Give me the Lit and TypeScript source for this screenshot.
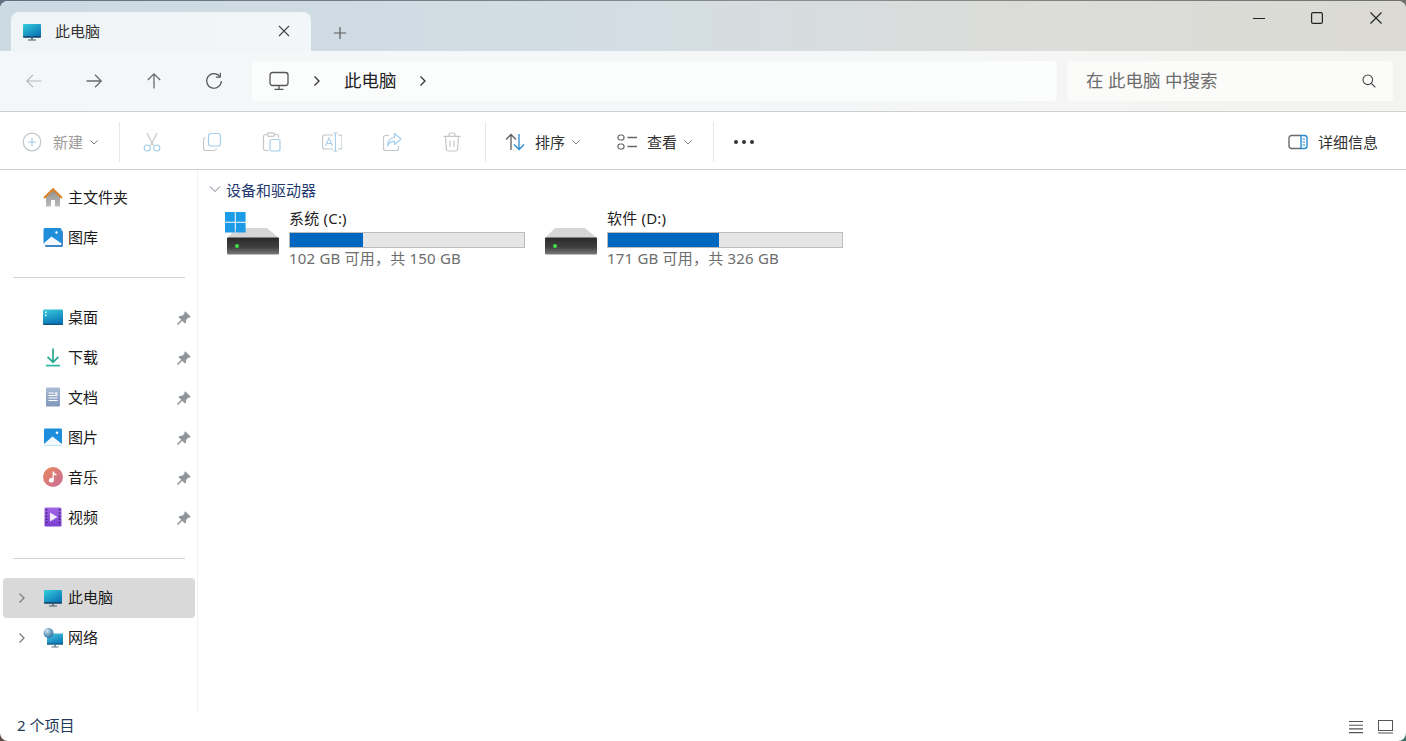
import { LitElement, html, css, svg } from "lit";
import { customElement } from "lit/decorators.js";

const i20 = (body: unknown, cls = "") => html`<svg class="ic ${cls}" width="20" height="20" viewBox="0 0 20 20" fill="none">${body}</svg>`;
const line = "#6b6b6b";

const monitor = (id: string) => i20(svg`
  <defs><linearGradient id=${id} x1="0" y1="0" x2="0.7" y2="1"><stop offset="0" stop-color="#35cfdc"/><stop offset="1" stop-color="#0b74b4"/></linearGradient></defs>
  <rect x="1" y="2" width="18" height="13" rx="0.8" fill="url(#${id})"/>
  <path d="M1 14.2h18V15a.8.8 0 0 1-.8.8H1.800A.8.8 0 0 1 1 15z" fill="#0d3f63"/>
  <path d="M9 16h2v1.500H9z" fill="#5c7482"/><path d="M6 17.500h8v1H6z" fill="#3f5968"/>`);

const home = i20(svg`
  <defs><linearGradient id="hb" x1="0" y1="0" x2="0" y2="1"><stop offset="0" stop-color="#8e8e8e"/><stop offset="1" stop-color="#bdbdbd"/></linearGradient></defs>
  <path d="M3 9.500 10 3l7 6.500V19.500H12V13H8v6.500H3z" fill="url(#hb)"/>
  <path d="M0.300 10.200 10 0.800l9.700 9.400-1.500 1.500L10 3.800 1.800 11.700z" fill="#d9832b"/>`);

const gallery = i20(svg`
  <rect x="2" y="3.500" width="18" height="16.500" rx="1.500" fill="#3f86c8"/>
  <rect x="0.500" y="1" width="18" height="17" rx="1.500" fill="#1f8fdc"/>
  <path d="M0.500 16.500 8.500 9.500l10 7V17a1 1 0 0 1-1 1H1.500a1 1 0 0 1-1-1z" fill="#f2f8fd"/>
  <circle cx="13.500" cy="5.500" r="1.200" fill="#fff"/>`);

const desktop = i20(svg`
  <defs><linearGradient id="dk" x1="0" y1="0" x2="0.3" y2="1"><stop offset="0" stop-color="#38c9da"/><stop offset="1" stop-color="#0c78b8"/></linearGradient></defs>
  <rect x="0" y="2.500" width="20" height="15" rx="1.200" fill="url(#dk)"/>
  <path d="M0 16.800h20v.2a1 1 0 0 1-1 1H1a1 1 0 0 1-1-1z" fill="#0d4f79"/>
  <rect x="2" y="4.500" width="1.600" height="1.600" fill="#e8fbff"/><rect x="2" y="7.500" width="1.600" height="1.600" fill="#e8fbff"/>`);

const download = i20(svg`
  <path d="M10 1.500V15M4.500 9.800 10 15.200l5.500-5.400" stroke="#2aa992" stroke-width="1.700"/>
  <path d="M3 18.600h14" stroke="#2fb6a0" stroke-width="1.700"/>`);

const docs = i20(svg`
  <defs><linearGradient id="dc" x1="0" y1="0" x2="0" y2="1"><stop offset="0" stop-color="#a9bcd6"/><stop offset="1" stop-color="#7f97ba"/></linearGradient></defs>
  <rect x="3" y="0.500" width="14" height="19" rx="1" fill="url(#dc)"/>
  <path d="M5.500 6h5.500M5.500 8.500h9M5.500 11h9M5.500 13.500h9" stroke="#fff" stroke-width="1"/>
  <rect x="12" y="5.500" width="2.500" height="2" fill="#fff"/>`);

const pictures = i20(svg`
  <rect x="1" y="1.500" width="18" height="17" rx="1.200" fill="#1c8edb"/>
  <path d="M1 17 9.500 9.500 19 17v.3a1.200 1.200 0 0 1-1.200 1.200H2.200A1.200 1.200 0 0 1 1 17.300z" fill="#f3f9fd"/>
  <circle cx="14" cy="5.800" r="1.300" fill="#fff"/>`);

const music = i20(svg`
  <defs><linearGradient id="mu" x1="0" y1="0" x2="1" y2="1"><stop offset="0" stop-color="#e98a55"/><stop offset="1" stop-color="#c96a9e"/></linearGradient></defs>
  <circle cx="10" cy="10" r="10" fill="url(#mu)"/>
  <path d="M9.600 4.500h1.300c.2 1.500 1.200 2.300 2.600 2.700v1.400c-1.100-.1-2-.6-2.600-1.200V13.200a2.500 2.300 0 1 1-1.300-2z" fill="#fff"/>`);

const video = i20(svg`
  <defs><linearGradient id="vi" x1="0" y1="0" x2="0" y2="1"><stop offset="0" stop-color="#a266e6"/><stop offset="1" stop-color="#7a3fd0"/></linearGradient></defs>
  <rect x="1.500" y="0.500" width="17" height="19" rx="1.200" fill="url(#vi)"/>
  <path d="M3.500 2v16M16.500 2v16" stroke="#3b2170" stroke-width="1.500" stroke-dasharray="1.500 1.700"/>
  <path d="M7 5.500v9l7.500-4.500z" fill="#f2eafd"/>`);

const network = i20(svg`
  <defs><linearGradient id="nt" x1="0" y1="0" x2="0.5" y2="1"><stop offset="0" stop-color="#4cc6e0"/><stop offset="1" stop-color="#0c7db9"/></linearGradient>
  <radialGradient id="gl" cx="0.35" cy="0.3" r="0.8"><stop offset="0" stop-color="#d6e6f0"/><stop offset="0.5" stop-color="#6fa3c4"/><stop offset="1" stop-color="#2c6a97"/></radialGradient></defs>
  <rect x="4" y="5.500" width="16" height="11" fill="url(#nt)"/><path d="M4 15.500h16v1H4z" fill="#0d4f79"/>
  <path d="M11 16.500h2v2h-2z" fill="#6c8796"/><path d="M8.500 18.500h7v1h-7z" fill="#5c7482"/>
  <circle cx="5.500" cy="5" r="5" fill="url(#gl)"/>`);

const pin = html`<svg class="pin" width="14" height="14" viewBox="0 0 14 14"><path d="M8.300 0.300 13.700 5.700l-1.200 1-.9-.3-2.400 2.400-.1 2.500-1.200 1.200L5.200 9.800 1 14 0 13l4.200-4.200-2.700-2.700 1.200-1.200 2.500-.1 2.400-2.400-.3-.9z" fill="#8e9499"/></svg>`;

const chevR = html`<svg class="tw" width="10" height="12" viewBox="0 0 10 12" fill="none"><path d="M2.500 1.500 7 6l-4.500 4.500" stroke="#7d7d7d" stroke-width="1.300"/></svg>`;
const chevD = html`<svg class="cd" width="10" height="10" viewBox="0 0 10 10" fill="none"><path d="M1.500 3.500 5 7l3.500-3.500" stroke="#7a7a7a" stroke-width="1"/></svg>`;
const chevHead = html`<svg width="12" height="10" viewBox="0 0 12 10" fill="none"><path d="M1 2.500 6 7.500l5-5" stroke="#6f7a8a" stroke-width="1"/></svg>`;

const back = (c: string) => i20(svg`<path d="M17.500 10H3M9 3.800 2.800 10 9 16.200" stroke=${c} stroke-width="1.200"/>`);
const fwd = i20(svg`<path d="M2.500 10H17M11 3.800 17.200 10 11 16.200" stroke=${line} stroke-width="1.300"/>`);
const up = i20(svg`<path d="M10 17.500V3M3.800 9 10 2.800 16.200 9" stroke=${line} stroke-width="1.300"/>`);
const refresh = i20(svg`<path d="M15.800 5.500A7.300 7.300 0 1 0 17.300 10" stroke="#555" stroke-width="1.200"/><path d="M16.300 1.800v4.400h-4.400" stroke="#555" stroke-width="1.200"/>`);
const pcOutline = i20(svg`<rect x="1" y="1.500" width="18" height="13" rx="2.500" stroke="#555" stroke-width="1.300"/><path d="M10 14.500v3.500M5.500 18.300h9" stroke="#555" stroke-width="1.300"/>`);

const G = "#c4c7c9", B = "#a6cdea";
const tNew = i20(svg`<circle cx="10" cy="10" r="8.800" stroke=${G} stroke-width="1.200"/><path d="M10 5.800v8.400M5.800 10h8.400" stroke=${B} stroke-width="1.200"/>`);
const tCut = i20(svg`<path d="M5 1l6.300 12.500M15 1 8.700 13.500" stroke=${G} stroke-width="1.200"/><circle cx="5.200" cy="16" r="3" stroke=${B} stroke-width="1.200"/><circle cx="14.800" cy="16" r="3" stroke=${B} stroke-width="1.200"/>`);
const tCopy = i20(svg`<path d="M3.500 5.500A2.500 2.500 0 0 0 1.500 8v8a2.500 2.500 0 0 0 2.500 2.500h8a2.500 2.500 0 0 0 2.500-2" stroke=${G} stroke-width="1.200"/><rect x="6.500" y="1.500" width="12" height="12.500" rx="2.500" stroke=${B} stroke-width="1.200"/>`);
const tPaste = i20(svg`<path d="M6.500 18.500H3.500a2 2 0 0 1-2-2V4.500a2 2 0 0 1 2-2h2M12 2.500h2.500a2 2 0 0 1 2 2V6" stroke=${G} stroke-width="1.200"/><rect x="5.500" y="0.800" width="7" height="3.500" rx="1.200" stroke=${G} stroke-width="1.200"/><rect x="8" y="7.500" width="10" height="11.500" rx="2" stroke=${B} stroke-width="1.200"/>`);
const tRen = i20(svg`<path d="M11.500 3H2.500a2 2 0 0 0-2 2v10a2 2 0 0 0 2 2h9M16 3h2a2 2 0 0 1 2 2v10a2 2 0 0 1-2 2h-2" stroke=${G} stroke-width="1.200"/><path d="M3.500 14 7 6l3.500 8M4.800 11.500h4.400M11.500 1h4M11.500 19h4M13.500 1v18" stroke=${B} stroke-width="1.100"/>`);
const tShare = i20(svg`<path d="M7 3.500H3.500a2 2 0 0 0-2 2v11a2 2 0 0 0 2 2h11a2 2 0 0 0 2-2V14" stroke=${G} stroke-width="1.200"/><path d="M12.500 1.500 19 7l-6.500 5.500V9.300C9 9.300 6.500 11 5.500 14c0-5 3-8.500 7-8.500z" stroke=${B} stroke-width="1.200" stroke-linejoin="round"/>`);
const tDel = i20(svg`<path d="M1.500 4.300h17M7 4V2.500A1.500 1.500 0 0 1 8.500 1h3A1.500 1.500 0 0 1 13 2.500V4M3.500 4.500l1 13A1.800 1.800 0 0 0 6.300 19h7.400a1.800 1.800 0 0 0 1.800-1.500l1-13M8 8.500v6.500M12 8.500v6.500" stroke=${G} stroke-width="1.200"/>`);
const tSort = i20(svg`<path d="M6 18V2.500M1 7.500l5-5 5 5" stroke="#5f5f5f" stroke-width="1.300"/><path d="M14 2v15.500M9 12.500l5 5 5-5" stroke="#2a8bd0" stroke-width="1.300"/>`);
const tView = i20(svg`<rect x="1" y="3" width="6" height="5" rx="2.200" stroke="#666" stroke-width="1.200"/><rect x="1" y="12" width="6" height="5" rx="2.200" stroke="#666" stroke-width="1.200"/><path d="M10.500 5.500H20M10.500 14.500H20" stroke="#666" stroke-width="1.300"/>`);
const tPanel = i20(svg`<path d="M13 3.500H3.500a2.500 2.500 0 0 0-2.500 2.500v8a2.500 2.500 0 0 0 2.500 2.500H13" stroke="#6a6a6a" stroke-width="1.400"/><path d="M13 3.500h3.500A2.500 2.500 0 0 1 19 6v8a2.500 2.500 0 0 1-2.500 2.500H13z" stroke="#2a8bd0" stroke-width="1.400"/><path d="M14.500 7h2.500M14.500 10h2.500M14.500 13h2.500" stroke="#2a8bd0" stroke-width="1.200"/>`);

const drive = (win: boolean, id: string) => html`<svg class="drive" width="56" height="46" viewBox="0 0 56 46" fill="none">
  <defs><linearGradient id=${id} x1="0" y1="0" x2="0" y2="1"><stop offset="0" stop-color="#2a2a2a"/><stop offset="0.55" stop-color="#3e3e3e"/><stop offset="1" stop-color="#7a7a7a"/></linearGradient></defs>
  <path d="M12 17h30l12 10H2z" fill="#d6d6d6"/>
  <rect x="2" y="26.500" width="52" height="17" rx="1" fill="url(#${id})"/>
  <circle cx="12" cy="35" r="2" fill="#3fe04c"/>
  ${win ? svg`<path d="M0 1h9.800v9.800H0zM10.800 1h9.800v9.800h-9.800zM0 11.800h9.800v9.800H0zM10.800 11.800h9.800v9.800h-9.800z" fill="#1d9be6"/>` : ""}
</svg>`;

const nav1 = [
  { icon: home, label: "主文件夹" },
  { icon: gallery, label: "图库" },
];
const nav2 = [
  { icon: desktop, label: "桌面" },
  { icon: download, label: "下载" },
  { icon: docs, label: "文档" },
  { icon: pictures, label: "图片" },
  { icon: music, label: "音乐" },
  { icon: video, label: "视频" },
];

@customElement("app-root")
export class AppRoot extends LitElement {
  static styles = css`
    :host {
      display: block; height: 100vh; overflow: hidden;
      font-family: "Noto Sans", "Noto Sans CJK SC", sans-serif;
      background:
        linear-gradient(90deg, #5f7180, #8c8f8e 60%, #6f6f6d) top / 100% 20px no-repeat,
        linear-gradient(90deg, #5a4a42, #5a4a42 50%, #3c6f66 50%, #3c6f66);
    }
    .win {
      box-sizing: border-box; margin-top: 1px; height: 740px;
      display: flex; flex-direction: column; background: #fff; border-radius: 8px; overflow: hidden;
    }
    svg { display: block; flex: none; }

    .title {
      height: 50px; flex: none; display: flex; align-items: flex-end; padding-left: 11px;
      background: linear-gradient(90deg, #cbdae3, #d3dde3 45%, #dcdcd8 75%, #dbdad5);
    }
    .tab {
      width: 300px; height: 39px; box-sizing: border-box; padding: 0 21px 2px 11px; display: flex; align-items: center;
      background: linear-gradient(90deg, #eff4f7, #f3f6f8); border-radius: 8px 8px 0 0;
      font-size: 15px; color: #333;
    }
    .tab .ic { margin-top: 2px; }
    .tab .name { margin-left: 13px; flex: 1; }
    .add { margin: 0 0 11px 22px; }
    .spacer { flex: 1; }
    .ctl { align-self: flex-start; display: flex; padding-right: 1px; }
    .ctl div { width: 58.500px; height: 34px; display: flex; align-items: center; justify-content: center; }

    .nav {
      height: 60px; flex: none; display: flex; align-items: center; padding: 0 13px 0 4px;
      background: linear-gradient(90deg, #f4f7f9, #f5f6f7 60%, #f3f3f0);
    }
    .nb { width: 60px; height: 40px; display: flex; align-items: center; justify-content: center; }
    .addr {
      flex: 1; height: 40px; margin: 0 10px 0 8px; border-radius: 4px; background: #fbfcfc;
      display: flex; align-items: center; padding-left: 17px; font-size: 17.500px; color: #222;
    }
    .addr .c1 { margin-left: 23px; }
    .addr .t { margin-left: 22px; padding-bottom: 3px; }
    .addr .c2 { margin-left: 21px; }
    .addr svg.tw path { stroke: #333; }
    .search {
      width: 326px; height: 40px; box-sizing: border-box; border-radius: 4px; background: #fbfbfa;
      display: flex; align-items: center; justify-content: space-between; padding: 0 17px 0 19px;
      font-size: 17.500px; color: #6c6c6c;
    }
    .search span { padding-bottom: 3px; }

    .tools {
      height: 59px; box-sizing: border-box; flex: none; display: flex; align-items: center; background: #fff;
      border-top: 1px solid #d0d0d0; border-bottom: 1px solid #d0d0d0; padding: 2px 28px 0 22px;
      font-size: 15px; color: #333;
    }
    .grp { display: flex; align-items: center; }
    .tgl { display: flex; align-items: center; }
    .tgl svg.ic { margin-right: 10px; }
    .tgl span { padding-bottom: 1px; }
    .tgl .cd { margin-left: 6px; }
    .dis { color: #9c9c9c; width: 97px; }
    .dis svg.ic { margin-right: 11px; }
    .vsep { width: 1px; height: 40px; background: #e6e6e6; flex: none; }
    .ti { width: 60px; display: flex; justify-content: center; }
    .sort { margin-left: 19px; }
    .view { margin-left: 36px; }
    .dots { margin-left: 20px; width: 20px; display: flex; justify-content: space-between; }
    .dots i { width: 4px; height: 4px; border-radius: 50%; background: #333; }
    .tools .vsep.a { margin-right: 2px; }
    .tools .vsep.b { margin-left: 3px; }
    .tools .vsep.c { margin-left: 20px; }
    .detail { display: flex; align-items: center; gap: 10px; }
    .detail span { padding-bottom: 1px; }

    .main { flex: 1; display: flex; min-height: 0; }
    .side { width: 197px; flex: none; padding-top: 7px; border-right: 1px solid #f2f2f2; }
    .row { height: 40px; display: flex; align-items: center; position: relative; padding-left: 43px; font-size: 15px; color: #1a1a1a; }
    .row .lbl { margin-left: 5px; flex: 1; padding-bottom: 2px; }
    .row .pin { margin: 2px 6px 0 0; }
    .row .tw { position: absolute; left: 17px; top: 14px; }
    .row.sel .lbl, .row.low .lbl { padding-bottom: 4px; }
    .row.sel { background: #d9d9d9; border-radius: 4px; margin: 1px 2px 0 3px; padding-left: 40px; }
    .row.sel .tw { left: 14px; top: 14px; }
    .hr { height: 40px; display: flex; align-items: center; padding: 1px 12px 0 13px; box-sizing: border-box; }
    .hr.two { padding-top: 2px; }
    .hr div { flex: 1; height: 1px; background: #d4d4d4; }

    .pane { flex: 1; padding: 7px 0 0 9px; }
    .head { display: flex; align-items: center; height: 24px; color: #1e3a70; font-size: 15px; gap: 5px; margin-left: 2px; }
    .tiles { display: flex; margin-top: 7px; padding-left: 18px; }
    .tile { width: 318px; display: flex; gap: 8px; }
    .tile .drive { margin-top: 3px; }
    .info { width: 236px; font-size: 15px; letter-spacing: 0.200px; }
    .nm { color: #1f1f1f; line-height: 22px; height: 22px; margin-top: -1px; }
    .bar { height: 16px; box-sizing: border-box; background: #e6e6e6; border: 1px solid #bcbcbc; margin-top: 3px; }
    .fill { height: 100%; background: #0067c0; }
    .sz { color: #6d6d6d; line-height: 20px; }

    .status { height: 29px; flex: none; display: flex; align-items: center; justify-content: space-between; padding: 0 13px 5px 17px; box-sizing: border-box; font-size: 15px; color: #22395a; }
    .vw { display: flex; gap: 15px; align-items: center; margin-top: 6px; }
  `;

  render() {
    return html`<div class="win">
      <div class="title">
        <div class="tab">
          ${monitor("m1")}
          <span class="name">此电脑</span>
          <svg width="12" height="12" viewBox="0 0 12 12" fill="none"><path d="M1 1l10 10M11 1 1 11" stroke="#444" stroke-width="1.100"/></svg>
        </div>
        <svg class="add" width="14" height="14" viewBox="0 0 14 14" fill="none"><path d="M7 1v12M1 7h12" stroke="#5a5a5a" stroke-width="1.200"/></svg>
        <div class="spacer"></div>
        <div class="ctl">
          <div><svg width="12" height="12" viewBox="0 0 12 12"><path d="M0 6.500h12" stroke="#222" stroke-width="1.100"/></svg></div>
          <div><svg width="12" height="12" viewBox="0 0 12 12" fill="none"><rect x="0.600" y="0.600" width="10.800" height="10.800" rx="1.500" stroke="#222" stroke-width="1.200"/></svg></div>
          <div><svg width="12" height="12" viewBox="0 0 12 12" fill="none"><path d="M0.500.500l11 11M11.500.500l-11 11" stroke="#222" stroke-width="1.100"/></svg></div>
        </div>
      </div>

      <div class="nav">
        <div class="nb">${back("#b4b7ba")}</div>
        <div class="nb">${fwd}</div>
        <div class="nb">${up}</div>
        <div class="nb">${refresh}</div>
        <div class="addr">
          ${pcOutline}
          <span class="c1">${chevR}</span>
          <span class="t">此电脑</span>
          <span class="c2">${chevR}</span>
        </div>
        <div class="search">
          <span>在 此电脑 中搜索</span>
          <svg width="14" height="14" viewBox="0 0 14 14" fill="none"><circle cx="5.800" cy="5.800" r="4.800" stroke="#444" stroke-width="1.100"/><path d="M9.300 9.300 13.300 13.300" stroke="#444" stroke-width="1.200"/></svg>
        </div>
      </div>

      <div class="tools">
        <div class="tgl dis">${tNew}<span>新建</span>${chevD}</div>
        <div class="vsep a"></div>
        <div class="grp">
          ${[tCut, tCopy, tPaste, tRen, tShare, tDel].map((t) => html`<div class="ti">${t}</div>`)}
        </div>
        <div class="vsep b"></div>
        <div class="tgl sort">${tSort}<span>排序</span>${chevD}</div>
        <div class="tgl view">${tView}<span>查看</span>${chevD}</div>
        <div class="vsep c"></div>
        <div class="dots"><i></i><i></i><i></i></div>
        <div class="spacer"></div>
        <div class="detail">${tPanel}<span>详细信息</span></div>
      </div>

      <div class="main">
        <div class="side">
          ${nav1.map((n) => html`<div class="row">${n.icon}<span class="lbl">${n.label}</span></div>`)}
          <div class="hr"><div></div></div>
          ${nav2.map((n) => html`<div class="row">${n.icon}<span class="lbl">${n.label}</span>${pin}</div>`)}
          <div class="hr two"><div></div></div>
          <div class="row sel">${chevR}${monitor("m2")}<span class="lbl">此电脑</span></div>
          <div class="row low">${chevR}${network}<span class="lbl">网络</span></div>
        </div>
        <div class="pane">
          <div class="head">${chevHead}<span>设备和驱动器</span></div>
          <div class="tiles">
            <div class="tile">
              ${drive(true, "d1")}
              <div class="info">
                <div class="nm">系统 (C:)</div>
                <div class="bar"><div class="fill" style="width:31.400%"></div></div>
                <div class="sz">102 GB 可用，共 150 GB</div>
              </div>
            </div>
            <div class="tile">
              ${drive(false, "d2")}
              <div class="info">
                <div class="nm">软件 (D:)</div>
                <div class="bar"><div class="fill" style="width:47.500%"></div></div>
                <div class="sz">171 GB 可用，共 326 GB</div>
              </div>
            </div>
          </div>
        </div>
      </div>

      <div class="status">
        <span>2 个项目</span>
        <div class="vw">
          <svg width="14" height="14" viewBox="0 0 14 14"><path d="M0 1.500h14M0 5.200h14M0 8.900h14M0 12.600h14" stroke="#555" stroke-width="1.100"/></svg>
          <svg width="15" height="14" viewBox="0 0 15 14" fill="none"><rect x="0.500" y="0.500" width="14" height="10" stroke="#555"/><path d="M0 13h15" stroke="#555" stroke-width="1.100"/></svg>
        </div>
      </div>
    </div>`;
  }
}
